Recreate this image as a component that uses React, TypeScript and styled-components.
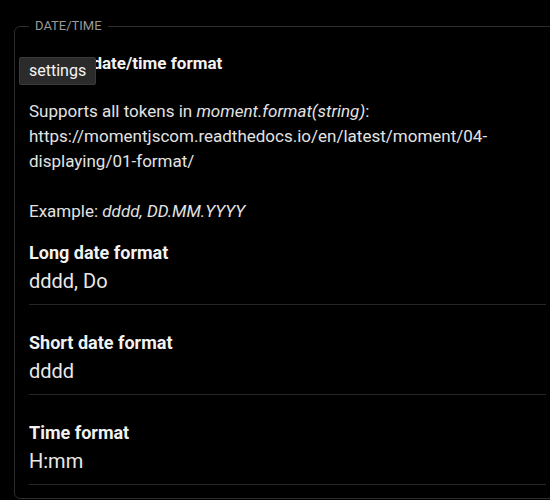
import { FC } from "react";
import styled, { createGlobalStyle } from "styled-components";

const GlobalStyle = createGlobalStyle`
  html, body {
    margin: 0;
    padding: 0;
    background: #000;
    overflow: hidden;
  }
  body {
    font-family: Roboto, "Noto Sans", sans-serif;
    color: #e3e3e3;
  }
`;

const Page = styled.div`
  width: 550px;
  height: 500px;
  padding: 17px 0 0 14px;
  box-sizing: border-box;
`;

const Section = styled.fieldset`
  position: relative;
  width: 547px;
  box-sizing: border-box;
  margin: 0;
  padding: 14px 14px 12px 14px;
  border: 1px solid #2c2c2c;
  border-radius: 6px;
  min-height: 482px;
`;

const Legend = styled.legend`
  padding: 0 6px;
  font-size: 13px;
  color: #9a9a9a;
  line-height: 18px;
`;

const Heading = styled.h3`
  margin: 2px 0 0;
  font-size: 17px;
  font-weight: 700;
  line-height: 24px;
  color: #f2f2f2;
`;

const Help = styled.p`
  margin: 24px 0 0;
  font-size: 17px;
  line-height: 25px;
  color: #e3e3e3;

  em {
    font-style: italic;
  }
`;

const Field = styled.div`
  padding-top: 17px;
  padding-bottom: 10px;
  border-bottom: 1px solid #262626;

  & + & {
    padding-top: 26px;
  }
`;

const Label = styled.div`
  font-size: 18px;
  font-weight: 700;
  line-height: 24px;
  color: #f2f2f2;
`;

const Value = styled.div`
  margin-top: 3px;
  font-size: 20px;
  line-height: 26px;
  color: #e8e8e8;
`;

const Tooltip = styled.div`
  position: absolute;
  left: 4px;
  top: 22px;
  padding: 3px 9px 4px;
  background: #2b2b2b;
  border: 1px solid #3a3a3a;
  border-radius: 2px;
  font-size: 16px;
  line-height: 19px;
  color: #f5f5f5;
`;

interface IFormatField {
  label: string;
  value: string;
}

const fields: IFormatField[] = [
  { label: "Long date format", value: "dddd, Do" },
  { label: "Short date format", value: "dddd" },
  { label: "Time format", value: "H:mm" },
];

const App: FC = () => {
  return (
    <>
      <GlobalStyle />
      <Page>
        <Section>
          <Legend>DATE/TIME</Legend>
          <Heading>Custom date/time format</Heading>
          <Help>
            Supports all tokens in <em>moment.format(string)</em>:
            <br />
            https://momentjscom.readthedocs.io/en/latest/moment/04-
            <br />
            displaying/01-format/
            <br />
            <br />
            Example: <em>dddd, DD.MM.YYYY</em>
          </Help>
          {fields.map((f) => (
            <Field key={f.label}>
              <Label>{f.label}</Label>
              <Value>{f.value}</Value>
            </Field>
          ))}
          <Tooltip>settings</Tooltip>
        </Section>
      </Page>
    </>
  );
};

export default App;
